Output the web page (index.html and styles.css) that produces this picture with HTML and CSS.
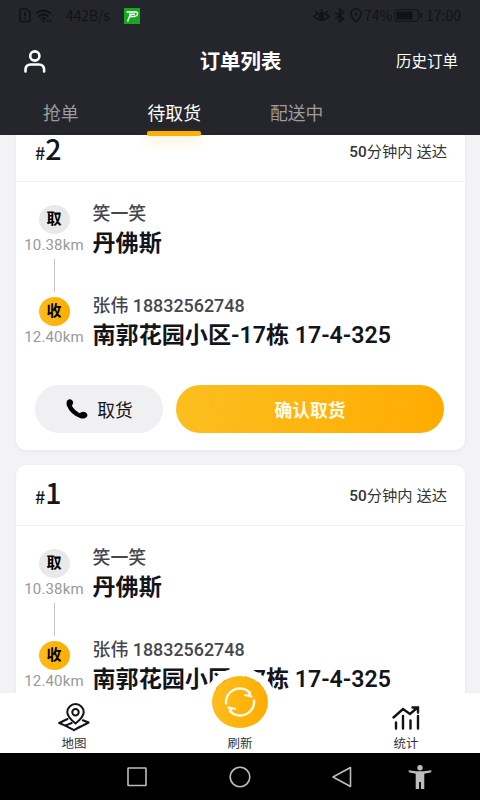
FILE: index.html
```html
<!DOCTYPE html>
<html lang="zh-CN">
<head>
<meta charset="utf-8">
<title>订单列表</title>
<link rel="stylesheet" href="styles.css">
</head>
<body>
<div class="app">
  <header class="header">
    <div class="status">
      <svg class="status-sim" width="12" height="15" viewBox="0 0 12 15"><path d="M2 1h5.500l3.500 3.500V12.500q0 1-1 1H2q-1 0-1-1V2q0-1 1-1z" fill="none" stroke="currentColor" stroke-width="1.600"/><path d="M6 4v4.500M6 9.800v1.700" stroke="currentColor" stroke-width="1.600"/></svg>
      <svg class="status-wifi" width="18" height="14" viewBox="0 0 18 14"><path d="M1 4.500Q8.500-1.500 16 4.500M3.500 7.500Q8.500 3.500 13.500 7.500M6 10Q8.500 8.300 11 10" fill="none" stroke="currentColor" stroke-width="1.800"/><circle cx="8.500" cy="12" r="1.300" fill="currentColor"/><path d="M11.500 12l2-2v4zM17 12l-2-2v4z" fill="currentColor"/></svg>
      <span class="status-speed">442B/s</span>
      <svg class="status-app" width="16" height="16" viewBox="0 0 16 16"><path fill="#18a820" d="M0 0h16v16H0z"/><path d="M2.500 4h9q2.500 0 2 2.200T10.500 8.600H5.500M5 6.300h6M6.500 6.300L3.500 13.500" fill="none" stroke="#fff" stroke-width="1.500"/></svg>
      <span class="spacer"></span>
      <svg class="status-eye" width="17" height="15" viewBox="0 0 17 15"><path d="M1 8.500Q8.500 1.500 16 8.500Q8.500 16 1 8.500zM8.500 4.500V1M4.200 5.500L2.500 2.800M12.800 5.500l1.700-2.700" fill="none" stroke="currentColor" stroke-width="1.500"/><circle cx="8.500" cy="8.700" r="2.800" fill="currentColor"/></svg>
      <svg class="status-bt" width="11" height="15" viewBox="0 0 11 15"><path d="M1 4l8.500 6.800L5.500 14V1l4 3.200L1 11" fill="none" stroke="currentColor" stroke-width="1.500"/></svg>
      <svg class="status-pin" width="12" height="15" viewBox="0 0 12 15"><path d="M6 14Q1 9 1 5.800a5 5 0 0 1 10 0Q11 9 6 14z" fill="none" stroke="currentColor" stroke-width="1.500"/><circle cx="6" cy="6" r="1.500" fill="currentColor"/></svg>
      <span class="status-pct">74%</span>
      <svg class="status-batt" width="28" height="13" viewBox="0 0 28 13"><rect x=".7" y=".7" width="23.600" height="11.600" rx="2" fill="none" stroke="currentColor"/><path d="M2.500 2.500h16v8h-16zM26 4h1.500v5H26z" fill="currentColor"/></svg>
      <span class="status-time">17:00</span>
    </div>
    <div class="titlebar">
      <svg class="user" width="22" height="23" viewBox="0 0 22 23"><circle cx="10.800" cy="6" r="4.600"/><path d="M1.500 21.500v-1.700q0-5.300 5.300-5.300h8q5.300 0 5.300 5.300v1.700"/></svg>
      <h1 class="title">订单列表</h1>
      <span class="history">历史订单</span>
    </div>
    <nav class="tabs">
      <span class="tab">抢单</span>
      <span class="tab tab-active">待取货</span>
      <span class="tab">配送中</span>
    </nav>
  </header>

  <main class="list">
    <article class="card">
      <div class="card-head"><span class="num"><small>#</small>2</span><span class="due"><b>50</b>分钟内 送达</span></div>
      <div class="route">
        <div class="stop">
          <div class="mark"><span class="dot">取</span><span class="dist">10.38km</span><i class="link"></i></div>
          <div class="place"><div class="who">笑一笑</div><div class="addr">丹佛斯</div></div>
        </div>
        <div class="stop">
          <div class="mark"><span class="dot dot-to">收</span><span class="dist">12.40km</span></div>
          <div class="place"><div class="who">张伟 18832562748</div><div class="addr">南郭花园小区-17栋 17-4-325</div></div>
        </div>
      </div>
      <div class="actions">
        <span class="btn call"><svg width="22" height="20" viewBox="0 0 22 20"><path d="M1.500 1.200Q4-.8 6.300 1.400Q8 3.500 6.500 5.500Q5.600 6.500 6.600 7.900Q9 11.600 12.800 13.700Q14 14.200 15 13.400Q17 12 19.800 13.600Q22.500 15.800 20.700 18Q18.500 20.300 14.500 19.200Q4.500 15.700 .8 6.500Q0 3 1.500 1.200z"/></svg>取货</span>
        <span class="btn confirm">确认取货</span>
      </div>
    </article>
    <article class="card">
      <div class="card-head"><span class="num"><small>#</small>1</span><span class="due"><b>50</b>分钟内 送达</span></div>
      <div class="route">
        <div class="stop">
          <div class="mark"><span class="dot">取</span><span class="dist">10.38km</span><i class="link"></i></div>
          <div class="place"><div class="who">笑一笑</div><div class="addr">丹佛斯</div></div>
        </div>
        <div class="stop">
          <div class="mark"><span class="dot dot-to">收</span><span class="dist">12.40km</span></div>
          <div class="place"><div class="who">张伟 18832562748</div><div class="addr">南郭花园小区-17栋 17-4-325</div></div>
        </div>
      </div>
    </article>
  </main>

  <footer class="tabbar">
    <div class="item">
      <svg width="32" height="29" viewBox="0 0 32 29" fill="none" stroke="#111319" stroke-width="2" stroke-linejoin="round" stroke-linecap="round"><path d="M17.500 20.500Q9.300 14 9.300 9.300a8.200 8.200 0 0 1 16.400 0Q25.700 14 17.500 20.500z"/><circle cx="17.500" cy="9.300" r="3.200"/><path d="M9.500 16L1.200 20l6 2.600 6.500-2.600M7.200 22.600L16 27.200 30.600 19.500l-5.800-2.300M16 27.200l6-3.500"/></svg>
      <span>地图</span>
    </div>
    <div class="item">
      <div class="refresh"><svg width="34" height="34" viewBox="0 0 34 34"><path d="M3 18.500A14 13.500 0 0 1 27 7.600M31 15.500A14 13.500 0 0 1 7 26.400" fill="none" stroke="#fffbe8" stroke-width="2.400" stroke-linecap="round"/><path d="M24.500 5.500l5.300 6q-.5 1.200-2 1L21.500 11q-1.500-1.800.5-1.800l3 .3zM9.500 28.500L4.200 22.500q.5-1.200 2-1L12.500 23q1.500 1.800-.5 1.800l-3-.3z" fill="#fffbe8"/></svg></div>
      <span>刷新</span>
    </div>
    <div class="item">
      <svg width="28" height="29" viewBox="0 0 28 29" fill="none" stroke="#111319" stroke-width="2.400" stroke-linecap="round"><path d="M1.500 14.500L11 6l7 5 7-6M20.500 4.500H26V9.500M4 19.500V25.500M11 13V25.500M18.500 17.500V25.500M26 13V25.500"/></svg>
      <span>统计</span>
    </div>
  </footer>

  <div class="sysnav">
    <svg width="22" height="20" viewBox="0 0 22 20"><rect x="2" y="1" width="18" height="17.500" rx=".5"/></svg>
    <svg width="22" height="22" viewBox="0 0 22 22"><circle cx="11" cy="11" r="9.800"/></svg>
    <svg width="20" height="22" viewBox="0 0 20 22"><path d="M1 11L18.500 1.500v19z" stroke-linejoin="round"/></svg>
    <svg class="person" width="24" height="24" viewBox="0 0 24 24"><circle cx="12" cy="2.800" r="2.700"/><path d="M.7 5.300L8 6.300h8l7.300-1v2L16.300 8.800V24h-3.400v-7h-1.800v7H7.700V8.800L.7 7.300z"/></svg>
  </div>
</div>
</body>
</html>
```

FILE: styles.css
```css
* { box-sizing: border-box; }

body {
  margin: 0;
  font-family: Roboto, "Noto Sans CJK SC", sans-serif;
  color: #13151b;
}

svg { display: block; flex: none; }

.app {
  width: 480px;
  height: 800px;
  display: flex;
  flex-direction: column;
  overflow: hidden;
  background: #f3f3f6;
}

/* header */
.header {
  position: relative;
  z-index: 2;
  height: 135px;
  flex: none;
  background: #25262b;
  color: #fff;
}

.status {
  height: 31px;
  padding: 0 19px;
  display: flex;
  align-items: center;
  color: #121317;
  font: 13.800px/31px "Noto Sans CJK SC", sans-serif;
}
.status-wifi { margin-left: 4px; }
.status-speed { margin-left: 13px; width: 45px; white-space: nowrap; }
.status-app { margin-left: 13px; }
.spacer { flex: 1; }
.status-bt { margin-left: 4px; }
.status-pin { margin-left: 5px; }
.status-pct { margin-left: 2px; width: 28px; font-size: 14px; }
.status-batt { margin-left: 2px; }
.status-time { margin-left: 4px; width: 35px; font-size: 14px; white-space: nowrap; }

.titlebar {
  height: 61px;
  padding: 0 22px 0 24px;
  display: grid;
  grid-template-columns: 1fr auto 1fr;
  align-items: center;
}
.user { fill: none; stroke: #fff; stroke-width: 2.600; stroke-linecap: round; }
.title { margin: 0; padding-right: 1px; font-size: 20.400px; line-height: 30px; font-weight: 700; }
.history { justify-self: end; font-size: 15.500px; line-height: 24px; padding-top: 1px; }

.tabs { display: flex; height: 43px; padding-left: 43px; color: #9b9ca0; }
.tab { font-size: 17.800px; line-height: 44px; height: 43px; margin-right: 69px; }
.tab-active { position: relative; color: #fff; }
.tab-active::after {
  content: "";
  position: absolute;
  left: -1px;
  right: 0;
  bottom: -.500px;
  height: 5px;
  border-radius: 2px;
  background: #fdb007;
  box-shadow: 0 5px 12px rgba(253, 176, 7, .25);
}

/* orders */
.list {
  flex: 1;
  min-height: 0;
  overflow: hidden;
  padding: 0 15.500px;
  display: flex;
  flex-direction: column;
  gap: 15px;
}
.card {
  flex: none;
  height: 329px;
  border-radius: 10px;
  background: #fff;
  box-shadow: 0 1px 4px rgba(30, 30, 60, .05);
}
.card:first-child { margin-top: -14px; }

.card-head {
  height: 61px;
  padding: 0 17.500px 0 19.500px;
  display: flex;
  justify-content: space-between;
  align-items: flex-start;
  border-bottom: 1.500px solid #f1f1f3;
}
.num { font: 500 28.500px/24px "Noto Sans CJK SC", sans-serif; padding-top: 15px; }
.num small { font-size: 18px; }
.due { font-size: 15.300px; line-height: 63px; height: 59px; color: #333; }
.due b { font-weight: 500; }

.route { padding: 22px 0 0 8.500px; }
.stop { display: flex; height: 92px; }
.mark { width: 60px; display: flex; flex-direction: column; align-items: center; }
.dot {
  width: 31px;
  height: 29px;
  margin-top: 1px;
  border-radius: 50%;
  background: #e9e9e9;
  color: #000;
  font-size: 15px;
  line-height: 28px;
  font-weight: 700;
  text-align: center;
}
.dot-to { background: linear-gradient(90deg, #fbbc1a, #ffad00); }
.dist { font-size: 15px; line-height: 20px; color: #999; letter-spacing: .15px; margin-top: 1px; }
.link { width: 1px; height: 33px; margin-top: 4px; background: #c5c5c5; }
.place { margin-left: 8.500px; white-space: nowrap; }
.who { font-size: 17.900px; line-height: 20px; font-weight: 500; color: #45464e; }
.addr { font-size: 23.100px; line-height: 30px; font-weight: 600; margin-top: 5px; }

.actions { display: flex; gap: 13px; padding: 0 20.500px 0 19.500px; margin-top: -3px; }
.btn {
  height: 48px;
  border-radius: 24px;
  display: flex;
  align-items: center;
  justify-content: center;
  font-size: 17.800px;
}
.call { width: 128px; gap: 9px; padding-left: 1px; background: #f0f0f2; }
.confirm {
  flex: 1;
  background: linear-gradient(100deg, #fbbf20, #ffab00);
  color: #fffbe8;
  font-weight: 700;
}

/* bottom tabs */
.tabbar {
  position: relative;
  z-index: 1;
  height: 60px;
  flex: none;
  display: flex;
  justify-content: space-between;
  padding: 0 49px;
  background: #fff;
}
.item {
  width: 50px;
  display: flex;
  flex-direction: column;
  align-items: center;
  justify-content: flex-end;
  gap: 3px;
  font-size: 12.500px;
  line-height: 18px;
  color: #333;
}
.refresh {
  width: 56px;
  height: 52px;
  margin-bottom: 4px;
  flex: none;
  border-radius: 50%;
  box-shadow: 0 0 0 8px #fff;
  display: flex;
  align-items: center;
  justify-content: center;
  background: linear-gradient(100deg, #fbbf20, #ffab00);
}

/* system navigation */
.sysnav {
  position: relative;
  z-index: 2;
  height: 47px;
  flex: none;
  background: #000;
  display: flex;
  align-items: center;
  padding-left: 126px;
}
.sysnav svg { fill: none; stroke: #bdbdbd; stroke-width: 1.600; margin-right: 81px; }
.sysnav svg + svg + svg { margin-right: 56px; }
.sysnav .person { fill: #bdbdbd; stroke: none; }
```
